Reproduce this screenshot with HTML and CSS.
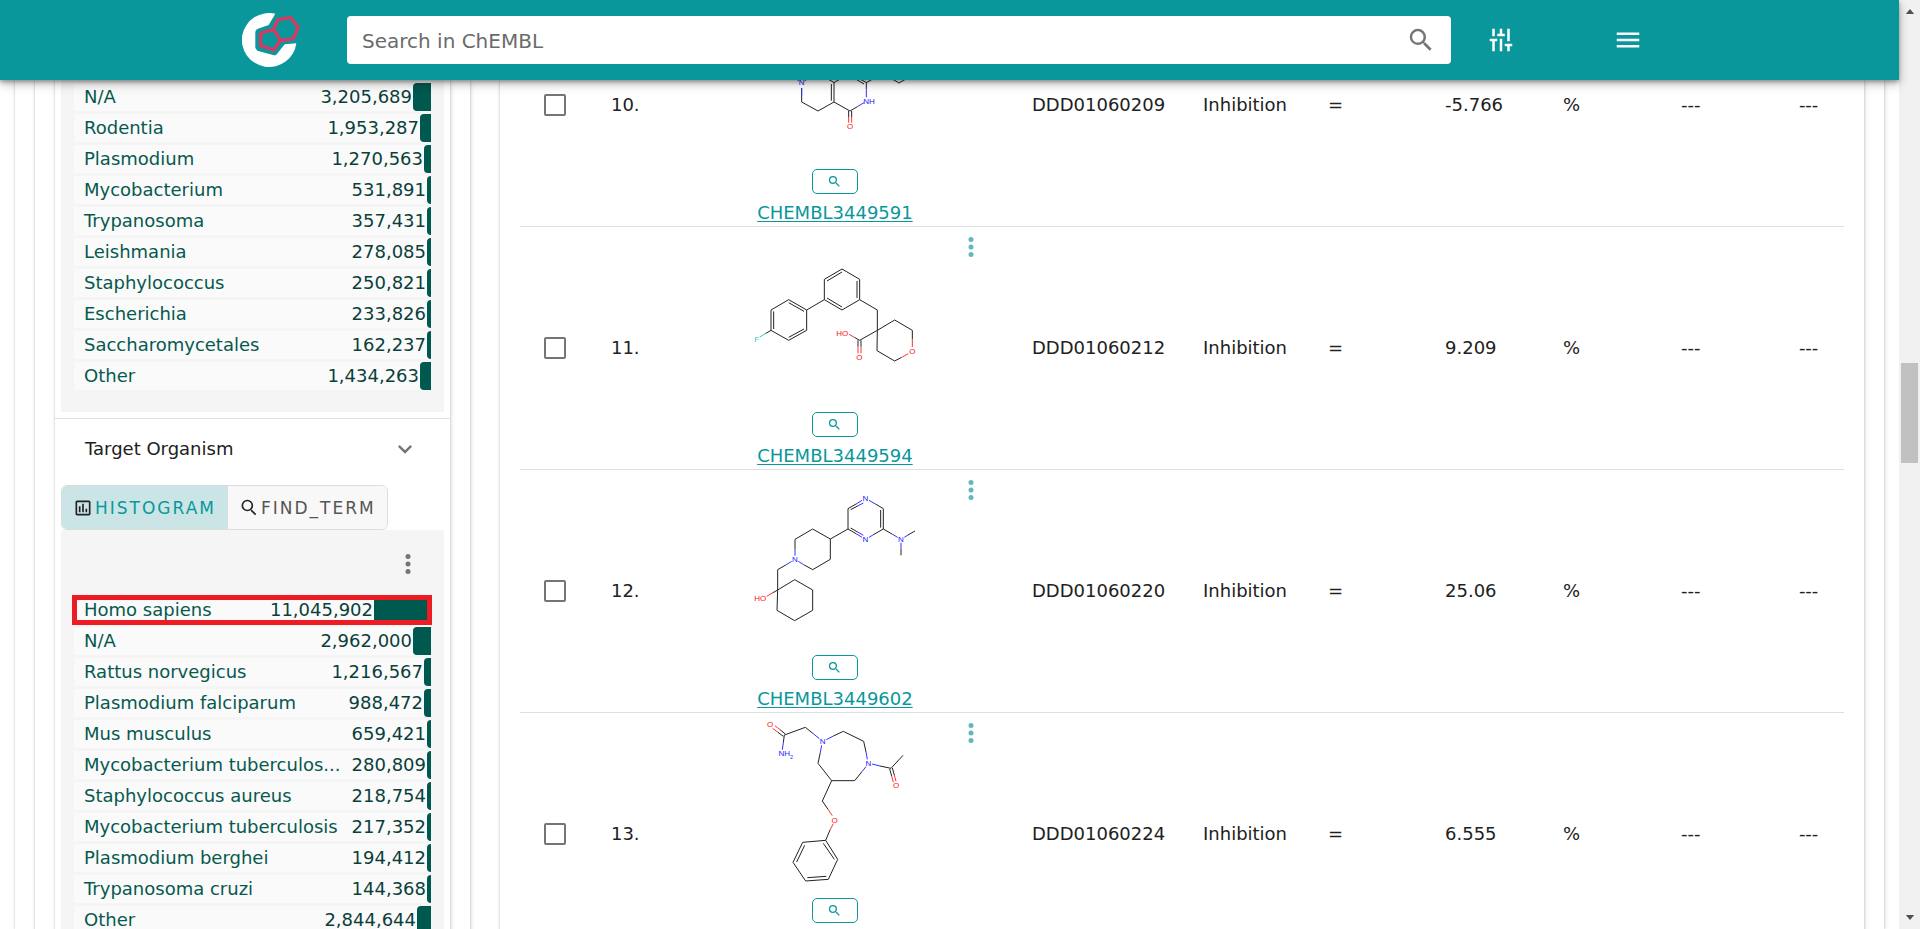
FILE: index.html
```html
<!DOCTYPE html>
<html lang="en">
<head>
<meta charset="utf-8">
<title>ChEMBL - Browse Activities</title>
<link rel="stylesheet" href="styles.css">
</head>
<body>
<svg class="defs" aria-hidden="true">
  <symbol id="magnify" viewBox="0 0 24 24"><path d="M9.500 3A6.500 6.500 0 0 1 16 9.500C16 11.110 15.410 12.590 14.440 13.730L14.710 14H15.500L20.500 19L19 20.500L14 15.500V14.710L13.730 14.440C12.590 15.410 11.110 16 9.500 16A6.500 6.500 0 0 1 3 9.500A6.500 6.500 0 0 1 9.500 3M9.500 5C7 5 5 7 5 9.500C5 12 7 14 9.500 14C12 14 14 12 14 9.500C14 7 12 5 9.500 5Z"/></symbol>
  <symbol id="magnify-thin" viewBox="0 0 24 24"><path d="M9.500 4A5.500 5.500 0 1 1 9.500 16A5.500 6 0 1 1 9.500 4M14 14L20 20" fill="none" stroke="currentColor" stroke-width="2"/></symbol>
  <symbol id="dots" viewBox="0 0 24 24"><circle cx="12" cy="6" r="2"/><circle cx="12" cy="12" r="2"/><circle cx="12" cy="18" r="2"/></symbol>
</svg>
<div class="window">
  <div class="app">
    <header class="topbar">
      <a class="logo" href="#" aria-label="ChEMBL home">
        <svg viewBox="0 0 174 162">
          <path d="M100 2A82 81 0 1 0 163 91L128 94L103 125Q99 128 93 126L46 113L40 105V57Q40 49 48 47L80 36Z" fill="#fff"/>
          <path d="M56 60L95 50L116 82L95 111L56 98ZM95 50L107 20L146 14L168 43L154 77L116 82" fill="none" stroke="#d63a62" stroke-width="10" stroke-linejoin="round"/>
        </svg>
      </a>
      <form class="search">
        <input type="text" placeholder="Search in ChEMBL" aria-label="Search in ChEMBL">
        <button type="button" aria-label="Search"><svg><use href="#magnify"/></svg></button>
      </form>
      <button class="bar-button" type="button" aria-label="Filters"><svg viewBox="0 0 24 24"><path d="M5 3H7V9H5ZM3 11H9V13H7V21H5V13H3ZM11 3H13V7H15V9H9V7H11ZM11 11H13V21H11ZM17 3H19V13H17ZM15 15H21V17H19V21H17V17H15Z"/></svg></button>
      <button class="bar-button menu" type="button" aria-label="Menu"><svg viewBox="0 0 24 24"><path d="M3 6H21V8H3ZM3 11H21V13H3ZM3 16H21V18H3Z"/></svg></button>
    </header>
    <main class="card page">
      <aside class="card filters">
        <div class="card facets">
          <section class="panel panel-first">
            <ul class="bars">
              <li><span class="name">N/A</span><span class="count">3,205,689</span><i style="width:18px"></i></li>
              <li><span class="name">Rodentia</span><span class="count">1,953,287</span><i style="width:11px"></i></li>
              <li><span class="name">Plasmodium</span><span class="count">1,270,563</span><i style="width:7px"></i></li>
              <li><span class="name">Mycobacterium</span><span class="count">531,891</span><i style="width:4px"></i></li>
              <li><span class="name">Trypanosoma</span><span class="count">357,431</span><i style="width:4px"></i></li>
              <li><span class="name">Leishmania</span><span class="count">278,085</span><i style="width:4px"></i></li>
              <li><span class="name">Staphylococcus</span><span class="count">250,821</span><i style="width:4px"></i></li>
              <li><span class="name">Escherichia</span><span class="count">233,826</span><i style="width:4px"></i></li>
              <li><span class="name">Saccharomycetales</span><span class="count">162,237</span><i style="width:4px"></i></li>
              <li><span class="name">Other</span><span class="count">1,434,263</span><i style="width:11px"></i></li>
            </ul>
          </section>
          <button class="facet-title" type="button">Target Organism
            <svg viewBox="0 0 24 24"><path d="M7.410 8.580L12 13.170L16.590 8.580L18 10L12 16L6 10Z"/></svg>
          </button>
          <div class="tabs">
            <button class="tab active" type="button"><svg viewBox="0 0 24 24"><path d="M9 17H7V10H9ZM13 17H11V7H13ZM17 17H15V13H17ZM19 19H5V5H19ZM19 3H5C3.900 3 3 3.900 3 5V19C3 20.100 3.900 21 5 21H19C20.100 21 21 20.100 21 19V5C21 3.900 20.100 3 19 3Z" fill-rule="evenodd"/></svg>HISTOGRAM</button>
            <button class="tab" type="button"><svg viewBox="0 0 24 24"><path d="M14.500 14.500L20 20" stroke="currentColor" stroke-width="2"/><circle cx="10" cy="9" r="6" fill="none" stroke="currentColor" stroke-width="2"/></svg>FIND_TERM</button>
          </div>
          <section class="panel">
            <div class="panel-tools"><button type="button" aria-label="Histogram options"><svg><use href="#dots"/></svg></button></div>
            <ul class="bars">
              <li class="marked"><span class="name">Homo sapiens</span><span class="count">11,045,902</span><i style="width:57px"></i></li>
              <li><span class="name">N/A</span><span class="count">2,962,000</span><i style="width:18px"></i></li>
              <li><span class="name">Rattus norvegicus</span><span class="count">1,216,567</span><i style="width:7px"></i></li>
              <li><span class="name">Plasmodium falciparum</span><span class="count">988,472</span><i style="width:7px"></i></li>
              <li><span class="name">Mus musculus</span><span class="count">659,421</span><i style="width:4px"></i></li>
              <li><span class="name">Mycobacterium tuberculos...</span><span class="count">280,809</span><i style="width:4px"></i></li>
              <li><span class="name">Staphylococcus aureus</span><span class="count">218,754</span><i style="width:4px"></i></li>
              <li><span class="name">Mycobacterium tuberculosis</span><span class="count">217,352</span><i style="width:4px"></i></li>
              <li><span class="name">Plasmodium berghei</span><span class="count">194,412</span><i style="width:4px"></i></li>
              <li><span class="name">Trypanosoma cruzi</span><span class="count">144,368</span><i style="width:4px"></i></li>
              <li><span class="name">Other</span><span class="count">2,844,644</span><i style="width:14px"></i></li>
            </ul>
          </section>
        </div>
      </aside>
      <section class="card results">
        <table>
          <colgroup><col class="c-check"><col class="c-index"><col class="c-mol"><col class="c-id"><col class="c-type"><col class="c-rel"><col class="c-num"><col class="c-num"><col class="c-num"><col></colgroup>
          <tbody>
            <tr>
              <td><input type="checkbox" aria-label="Select 10"></td><td>10.</td>
              <td class="mol"><div class="structure">
                <svg class="molecule" viewBox="735 -252 540 540">
                  <path d="M905 54V96L954 123L1002 96V38L954 8L914 32M994 92V42M1002 96L1050 123M1046 123V141M1055 123V141M1050 123L1072 110M1002 38L1024 25M1099 38L1077 25M1092 42L1070 29M1099 38V58M1099 38L1148 10L1197 39L1246 10"/>
                  <path class="n" d="M905 54V76M1072 110L1092 98M1099 58V82M1024 25L1045 12M1077 25L1056 12M896 32L870 16"/>
                  <path class="o" d="M1046 141V158M1055 141V158"/>
                  <text class="n" x="905" y="46">N</text><text class="n" x="1107" y="103">NH</text><text class="o" x="1050" y="176">O</text>
                </svg>
                <button class="zoom" type="button" aria-label="Enlarge structure"><svg><use href="#magnify"/></svg></button>
                <a href="#">CHEMBL3449591</a></div></td>
              <td>DDD01060209</td><td>Inhibition</td><td>=</td><td>-5.766</td><td>%</td><td>---</td><td>---</td>
            </tr>
            <tr>
              <td><input type="checkbox" aria-label="Select 11"></td><td>11.</td>
              <td class="mol"><button class="more" type="button" aria-label="Options"><svg><use href="#dots"/></svg></button><div class="structure">
                <svg class="molecule" viewBox="75 -3 540 540">
                  <path d="M366 117L419 148V209L366 240L313 209V148ZM321 153L366 126M411 153V204M366 231L321 204M313 209L260 240M206 209L260 240V301L206 331L153 301V240ZM206 218L252 244M252 297L206 322M161 297V244M153 301L136 311M419 209L472 240V301L524 270L577 301V328M545 382L524 393L471 362L472 301L419 331L403 322M414 331V350M423 331V350"/>
                  <path class="f" d="M136 311L119 321"/><path class="o" d="M577 328V351M565 371L545 382M403 322L387 313M414 350V370M423 350V370"/>
                  <text class="f" x="110" y="335">F</text><text class="o" x="367" y="317">HO</text><text class="o" x="418" y="390">O</text><text class="o" x="577" y="371">O</text>
                </svg>
                <button class="zoom" type="button" aria-label="Enlarge structure"><svg><use href="#magnify"/></svg></button>
                <a href="#">CHEMBL3449594</a></div></td>
              <td>DDD01060212</td><td>Inhibition</td><td>=</td><td>9.209</td><td>%</td><td>---</td><td>---</td>
            </tr>
            <tr>
              <td><input type="checkbox" aria-label="Select 12"></td><td>12.</td>
              <td class="mol"><button class="more" type="button" aria-label="Options"><svg><use href="#dots"/></svg></button><div class="structure">
                <svg class="molecule" viewBox="75 6 540 540">
                  <path d="M468 103L490 116V177L462 193M410 192L384 177V116L410 101M392 119L411 109M482 120V173M392 174L411 185M490 177L516 192M564 195L585 183M543 236V256M384 177L331 207L278 177L225 208V238M251 284L278 299L331 268V207M199 284L173 299V360L224 329L278 360V421L224 452L171 421L173 360L157 369"/>
                  <path class="n" d="M468 103L447 91M462 193L447 202M410 192L426 202M410 101L426 91M411 109L430 99M411 185L430 196M516 192L533 202M553 202L564 195M543 218V236M225 238V257M251 284L235 274M199 284L215 274"/><path class="o" d="M157 369L140 379"/>
                  <text class="n" x="436" y="94">N</text><text class="n" x="436" y="216">N</text><text class="n" x="543" y="216">N</text><text class="n" x="225" y="276">N</text><text class="o" x="121" y="394">HO</text>
                </svg>
                <button class="zoom" type="button" aria-label="Enlarge structure"><svg><use href="#magnify"/></svg></button>
                <a href="#">CHEMBL3449602</a></div></td>
              <td>DDD01060220</td><td>Inhibition</td><td>=</td><td>25.06</td><td>%</td><td>---</td><td>---</td>
            </tr>
            <tr>
              <td><input type="checkbox" aria-label="Select 13"></td><td>13.</td>
              <td class="mol"><button class="more" type="button" aria-label="Options"><svg><use href="#dots"/></svg></button><div class="structure">
                <svg class="molecule" viewBox="75 45 540 540">
                  <path d="M190 109L174 97M196 102L180 89M193 105L256 82L281 102M193 105L190 128M340 108L370 94L431 124L438 156M425 216L404 242H335L294 190L301 157M480 198L513 205L549 166M509 207L515 228M517 204L523 225M335 242L307 303L324 328M330 390L317 421L353 478L325 538L257 543L219 487L248 427L317 421M310 430L343 478M319 529L262 533M230 486L254 436"/>
                  <path class="n" d="M281 102L298 116M190 128L187 149M340 108L319 119M438 156L442 178M425 216L438 200M301 157L305 136M480 198L456 192"/>
                  <path class="o" d="M174 97L158 85M180 89L165 77M515 228L520 247M523 225L528 244M324 328L337 347M330 390L340 371"/>
                  <text class="o" x="150" y="81">O</text><text class="n" x="197" y="168">NH<tspan class="sub" dy="8">2</tspan></text><text class="n" x="308" y="132">N</text><text class="n" x="445" y="198">N</text><text class="o" x="528" y="265">O</text><text class="o" x="344" y="368">O</text>
                </svg>
                <button class="zoom" type="button" aria-label="Enlarge structure"><svg><use href="#magnify"/></svg></button></div></td>
              <td>DDD01060224</td><td>Inhibition</td><td>=</td><td>6.555</td><td>%</td><td>---</td><td>---</td>
            </tr>
          </tbody>
        </table>
      </section>
    </main>
  </div>
  <div class="scrollbar" aria-hidden="true">
    <svg viewBox="0 0 10 6"><path d="M0 6L5 0L10 6Z"/></svg>
    <div class="track"><div class="thumb"></div></div>
    <svg viewBox="0 0 10 6"><path d="M0 0L5 6L10 0Z"/></svg>
  </div>
</div>
</body>
</html>
```

FILE: styles.css
```css
* { box-sizing: border-box; }
body { margin: 0; background: #fff; color: #212121; font-family: Verdana, "DejaVu Sans", sans-serif; font-size: 18px; line-height: 26px; }
button { margin: 0; padding: 0; border: 0; background: none; color: inherit; font: inherit; cursor: pointer; }
svg { display: block; fill: currentColor; flex: none; }
.defs { position: absolute; width: 0; height: 0; }

.window { display: flex; height: 100vh; overflow: hidden; }
.app { flex: 1; min-width: 0; display: flex; flex-direction: column; }

.topbar { position: relative; z-index: 2; flex: none; display: flex; align-items: center; height: 80px; padding: 0 256px 0 242px; background: #09979b; color: #fff; box-shadow: 0 2px 4px rgba(0,0,0,.3), 0 4px 10px rgba(0,0,0,.25); }
.logo { width: 58px; margin-right: 47px; }
.logo svg { width: 58px; height: 54px; }
.search { flex: 1; display: flex; align-items: center; height: 48px; padding: 0 15px; background: #fff; border-radius: 4px; color: #757575; }
.search input { flex: 1; min-width: 0; border: 0; outline: 0; padding: 2px 0 0; background: none; font: inherit; font-size: 20px; }
.search input::placeholder { color: #6b6b6b; opacity: 1; }
.search svg, .bar-button svg { width: 30px; height: 30px; }
.bar-button { margin-left: 35px; }
.bar-button.menu { margin-left: 97px; }

.card { background: #fff; box-shadow: 0 0 2px rgba(0,0,0,.22), 1px 1px 5px rgba(0,0,0,.12); }
.page { flex: 1; min-height: 0; display: grid; grid-template-columns: minmax(0, 435fr) minmax(0, 1364fr); gap: 30px; margin: 0 15px; padding: 0 20px; }
.filters { padding: 0 20px; }
.filters, .facets, .results { height: 1000px; }
.results { padding: 0 20px; }

.panel { margin: 0 6px; padding: 0 13px; background: #f5f5f5; }
.panel-first { padding-top: 3px; padding-bottom: 22px; }
.panel-tools { display: flex; justify-content: flex-end; align-items: center; height: 66px; padding: 2px 8px 0 0; color: #757575; }
.panel-tools svg { width: 30px; height: 30px; }
.bars { display: grid; gap: 3px; margin: 0; padding: 0; list-style: none; }
.bars li { position: relative; display: flex; align-items: center; height: 28px; padding-left: 10px; background: #fafafa; color: #0a3f3b; }
.bars .name { flex: 1; min-width: 0; white-space: nowrap; color: #06594f; }
.bars .count { padding-right: 1px; }
.bars i { height: 28px; background: #00594f; border-radius: 4px 0 0 4px; }
.bars .marked::after { content: ""; position: absolute; inset: -1px -1px -1px -2px; border: 5px solid #ed1c24; }
.facet-title { display: flex; align-items: center; justify-content: space-between; width: 100%; height: 60px; margin-top: 6px; padding: 0 31px 0 30px; border-top: 1px solid #e0e0e0; }
.facet-title svg { width: 28px; height: 28px; color: #757575; }
.tabs { display: flex; width: max-content; margin: 7px 6px 0; border: 1px solid #dcdcdc; border-radius: 6px; overflow: hidden; }
.tab { display: flex; align-items: center; gap: 2px; height: 43px; padding: 0 11px; background: #f8f8f8; color: #555; font-size: 17px; letter-spacing: 2px; }
.tab svg { width: 20px; height: 20px; color: #222; }
.tab.active { background: #cbe5e6; color: #09979b; border-right: 1px solid #dcdcdc; }

table { width: 100%; margin-top: -97px; table-layout: fixed; border-collapse: collapse; }
.c-check { width: 5.66%; }
.c-index { width: 6.72%; }
.c-mol { width: 25.08%; }
.c-id { width: 12.92%; }
.c-type { width: 9.44%; }
.c-rel { width: 8.84%; }
.c-num { width: 8.91%; }
tr { height: 243px; border-top: 1px solid #e0e0e0; }
td { padding: 0 0 0 16px; white-space: nowrap; }
td:first-child { padding-left: 24px; }
td.mol { position: relative; padding: 0 30px 0 0; vertical-align: top; }
td input { display: block; appearance: none; width: 22px; height: 22px; margin: 0; border: 2px solid #757575; border-radius: 2px; }
.structure { display: flex; flex-direction: column; align-items: center; padding-top: 2px; }
.structure a { margin-top: 6px; color: #09979b; text-decoration: underline; text-underline-offset: 2px; }
.zoom { display: grid; place-items: center; width: 46px; height: 25px; margin-top: 3px; border: 1px solid #09979b; border-radius: 5px; color: #09979b; }
.zoom svg { width: 15px; height: 15px; }
.more { position: absolute; top: 5px; right: 30px; color: #60b8bb; }
.more svg { width: 30px; height: 30px; }

.molecule { width: 180px; height: 180px; font-family: "Liberation Sans", sans-serif; font-size: 24px; text-anchor: middle; }
.molecule path { fill: none; stroke: #222; stroke-width: 3; }
.molecule path.n { stroke: #33f; }
.molecule path.o { stroke: #f33; }
.molecule path.f { stroke: #3cc; }
.molecule text.n { fill: #22f; }
.molecule text.o { fill: #f11; }
.molecule text.f { fill: #3cc; }
.molecule .sub { font-size: 16px; }

.scrollbar { flex: none; display: flex; flex-direction: column; align-items: center; width: 21px; padding: 9px 2px; background: #f1f1f1; color: #505050; }
.scrollbar svg { width: 10px; height: 5px; }
.track { flex: 1; width: 100%; padding-top: 349px; }
.thumb { height: 100px; background: #c1c1c1; }
```
